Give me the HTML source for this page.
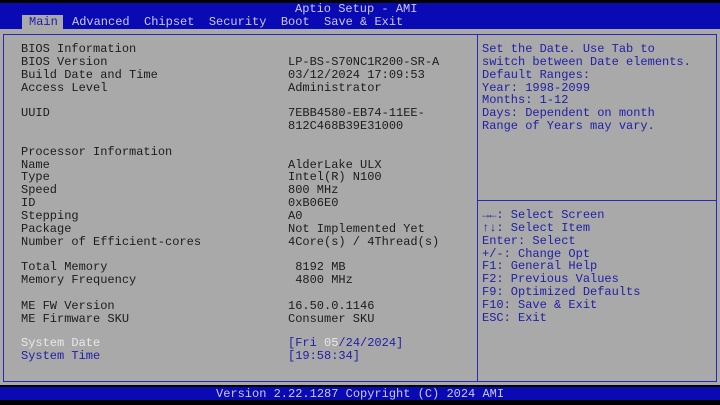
<!DOCTYPE html>
<html><head><style>
body{margin:0;width:720px;height:405px;background:#000;position:relative;overflow:hidden;font-family:"Liberation Mono","DejaVu Sans Mono",monospace;font-size:12px;}
.a{position:absolute;white-space:pre;line-height:12.85px;color:#1c1c1c}
.b{color:#2020a8}.w{color:#e8e8e8}.t{color:#c8c8e8}
</style></head><body>
<div style="position:absolute;left:0;top:3px;width:720px;height:26px;background:#0a0ab4"></div>
<div style="position:absolute;left:0;top:29px;width:720px;height:356px;background:#a9a9a9"></div>
<div style="position:absolute;left:22px;top:15px;width:41px;height:14px;background:#a9a9a9"></div>
<div style="position:absolute;left:3px;top:34px;width:712px;height:346px;border:1px solid #2828b0"></div>
<div style="position:absolute;left:477px;top:34px;width:1px;height:347px;background:#2828b0"></div>
<div style="position:absolute;left:478px;top:200px;width:238px;height:1px;background:#2828b0"></div>
<div style="position:absolute;left:0;top:387px;width:720px;height:13px;background:#0a0ab4"></div>
<div class="a t" style="left:295px;top:3px">Aptio Setup - AMI</div>
<div class="a" style="left:29px;top:16px;color:#2020a8">Main</div>
<div class="a t" style="left:72px;top:16px">Advanced  Chipset  Security  Boot  Save &amp; Exit</div>
<div class="a t" style="left:216px;top:388px">Version 2.22.1287 Copyright (C) 2024 AMI</div>
<div class="a" style="left:21px;top:43px">BIOS Information
BIOS Version
Build Date and Time
Access Level

UUID


Processor Information
Name
Type
Speed
ID
Stepping
Package
Number of Efficient-cores

Total Memory
Memory Frequency

ME FW Version
ME Firmware SKU</div>
<div class="a" style="left:288px;top:55.85px">LP-BS-S70NC1R200-SR-A
03/12/2024 17:09:53
Administrator

7EBB4580-EB74-11EE-
812C468B39E31000


AlderLake ULX
Intel(R) N100
800 MHz
0xB06E0
A0
Not Implemented Yet
4Core(s) / 4Thread(s)

 8192 MB
 4800 MHz

16.50.0.1146
Consumer SKU</div>
<div class="a w" style="left:21px;top:337px">System Date</div>
<div class="a b" style="left:21px;top:350px">System Time</div>
<div class="a b" style="left:288px;top:337px">[Fri <span class="w">05</span>/24/2024]
[19:58:34]</div>
<div class="a b" style="left:482px;top:43px">Set the Date. Use Tab to
switch between Date elements.
Default Ranges:
Year: 1998-2099
Months: 1-12
Days: Dependent on month
Range of Years may vary.</div>
<div class="a b" style="left:482px;top:209px">→←: Select Screen
↑↓: Select Item
Enter: Select
+/-: Change Opt
F1: General Help
F2: Previous Values
F9: Optimized Defaults
F10: Save &amp; Exit
ESC: Exit</div>
</body></html>
